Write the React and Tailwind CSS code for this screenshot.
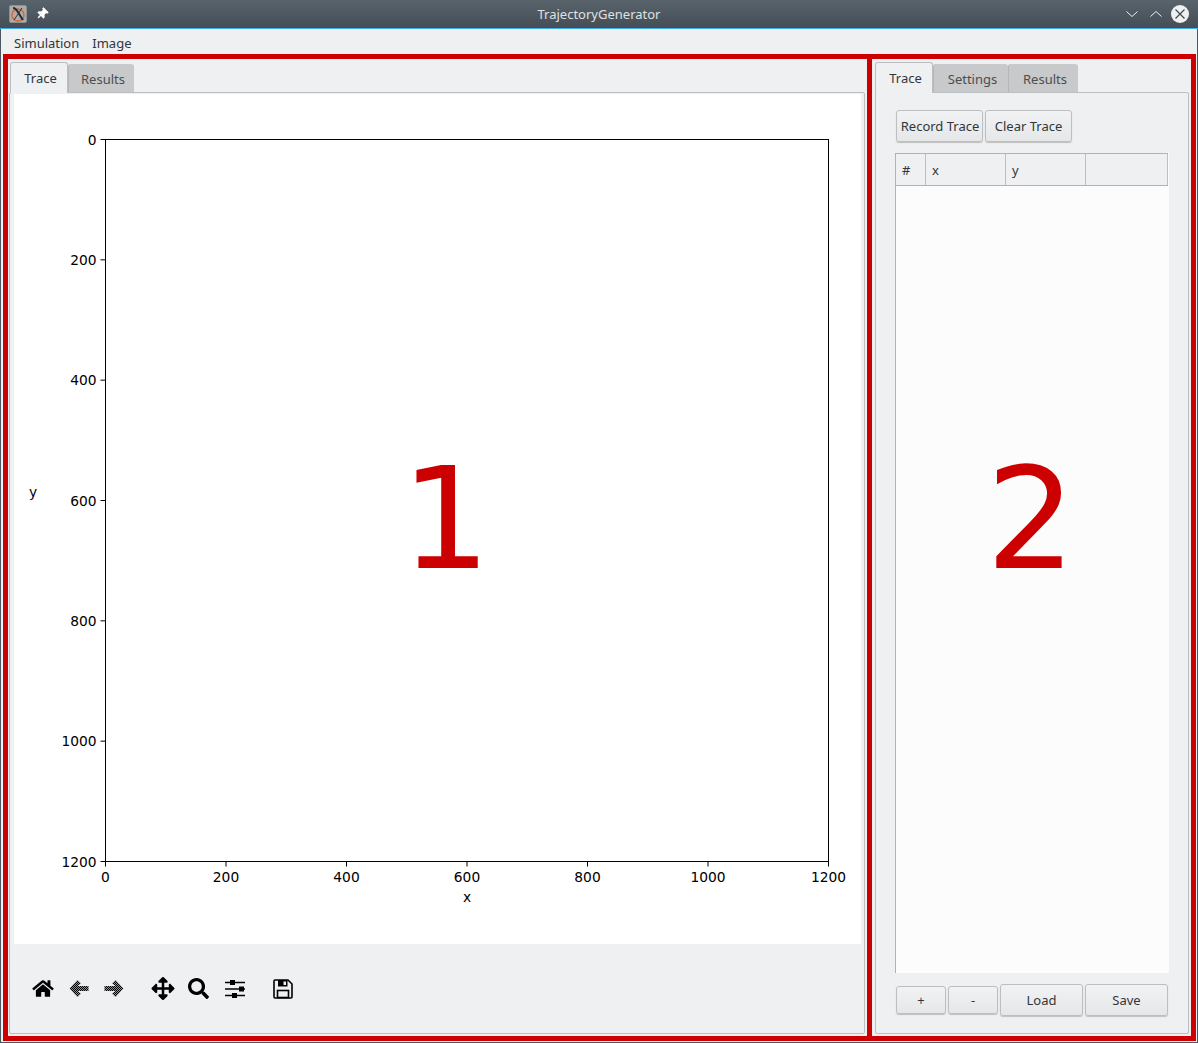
import { FaHome, FaArrowsAlt, FaSearch, FaThumbtack } from "react-icons/fa";

/* ================= SMALL PARTS ================= */

function Tab({ label, active, width }) {
    if (active) {
        return (
            <div
                className={`relative z-10 flex h-[31px] items-center justify-center rounded-t-[3px] border border-b-0 border-[#bcbebf] bg-[#eff0f1] pl-[3px] pt-[1px] text-[#31363b] ${width}`}
            >
                {label}
            </div>
        );
    }
    return (
        <div
            className={`mt-[2px] flex h-[28px] items-center justify-center rounded-t-[3px] border-l border-[#b4b6b8] bg-[#c8c9cb] pl-[3px] pt-[4px] text-[#4d4d4d] ${width}`}
        >
            {label}
        </div>
    );
}

function Button({ label, className }) {
    return (
        <div
            className={`flex items-center justify-center rounded-[3px] border border-[#bcbebf] bg-gradient-to-b from-[#f1f2f3] to-[#e6e7e9] pt-[2px] text-[#31363b] shadow-[0_1px_1px_rgba(0,0,0,0.2)] ${className}`}
        >
            {label}
        </div>
    );
}

function Header({ label, className }) {
    return (
        <div className={`flex items-center border-r border-[#bcbebf] pl-[6px] pt-[2px] text-[#31363b] ${className}`}>
            {label}
        </div>
    );
}

function BigNumber({ value, className }) {
    return (
        <div
            className={`pointer-events-none absolute text-[141px] leading-none text-[#cc0000] [font-family:'DejaVu_Sans',sans-serif] ${className}`}
        >
            {value}
        </div>
    );
}

/* ================= CHART ================= */

const ticks = [0, 200, 400, 600, 800, 1000, 1200];

function Chart() {
    const left = 91.5;
    const top = 45.5;
    const width = 723;
    const height = 722;
    return (
        <svg width="847" height="850" className="block" style={{ fontFamily: "'DejaVu Sans', sans-serif" }}>
            <rect x={left} y={top} width={width} height={height} fill="#fff" stroke="#000" strokeWidth="1" />
            {ticks.map((t) => {
                const py = (t / 1200) * height;
                const px = (t / 1200) * width;
                return (
                    <g key={t} fontSize="13.8" fill="#000">
                        <line x1={left - 5} x2={left} y1={top + py} y2={top + py} stroke="#000" />
                        <text x={left - 9} y={top + py + 5.3} textAnchor="end">
                            {t}
                        </text>
                        <line x1={left + px} x2={left + px} y1={top + height} y2={top + height + 5} stroke="#000" />
                        <text x={left + px} y={top + height + 20.5} textAnchor="middle">
                            {t}
                        </text>
                    </g>
                );
            })}
            <text x={left + width / 2} y="808" textAnchor="middle" fontSize="13.8">
                x
            </text>
            <text x="19" y="403" textAnchor="middle" fontSize="13.8">
                y
            </text>
        </svg>
    );
}

/* ================= ICONS ================= */

function AppLogo() {
    return (
        <svg width="18" height="18" viewBox="0 0 18 18">
            <rect x="0.5" y="0.5" width="17" height="17" rx="1.5" fill="#a9adb0" stroke="#8b9095" />
            <circle cx="9" cy="10" r="6" fill="none" stroke="#d9682b" strokeWidth="1.5" />
            <path d="M4 3 C8 3 9 8 14 15" fill="none" stroke="#2a2a2a" strokeWidth="2" />
            <path d="M13 3 L5 15" fill="none" stroke="#333" strokeWidth="1" />
        </svg>
    );
}

// disabled toolbar arrows are dithered in the picture
function DitherArrow({ id, flip, className }) {
    return (
        <svg width="20" height="20" viewBox="0 0 20 20" className={className}>
            <defs>
                <pattern id={id} width="2" height="2" patternUnits="userSpaceOnUse">
                    <rect width="2" height="2" fill="#8f9091" />
                    <rect width="1" height="1" fill="#000" />
                    <rect x="1" y="1" width="1" height="1" fill="#000" />
                </pattern>
            </defs>
            <path
                transform={flip ? "matrix(-1 0 0 1 20 0)" : undefined}
                d="M0.5 9.5 L8.5 1 L12 4.5 L8.5 7 L19.5 7 L19.5 12 L8.5 12 L12 14.5 L8.5 18 Z"
                fill={`url(#${id})`}
            />
        </svg>
    );
}

function SlidersIcon({ className }) {
    return (
        <svg width="20" height="20" viewBox="0 0 20 20" className={className}>
            <path d="M0 3.5H20M0 10H20M0 16.5H20" stroke="#000" strokeWidth="1.5" />
            <rect x="5" y="1" width="5" height="5" fill="#000" />
            <rect x="14" y="7.5" width="5" height="5" fill="#000" />
            <rect x="7" y="14" width="5" height="5" fill="#000" />
        </svg>
    );
}

function SaveIcon({ className }) {
    return (
        <svg width="20" height="20" viewBox="0 0 20 20" className={className}>
            <path
                d="M2 1H15L19 5V18C19 18.6 18.6 19 18 19H2C1.4 19 1 18.6 1 18V2C1 1.4 1.4 1 2 1Z"
                fill="none"
                stroke="#000"
                strokeWidth="1.6"
            />
            <rect x="4.5" y="11.5" width="11" height="7" fill="none" stroke="#000" strokeWidth="1.6" />
            <path fillRule="evenodd" d="M5 1H14.5V7.5H5ZM10.5 2.5V6H13V2.5Z" fill="#000" />
        </svg>
    );
}

/* ================= PAGE ================= */

export default function App() {
    return (
        <div className="flex h-[1043px] w-[1198px] flex-col overflow-hidden bg-[#eff0f1] text-[13px] text-[#31363b] [font-family:'Noto_Sans',sans-serif]">
            {/* ===== TITLE BAR ===== */}
            <div className="relative flex h-[28px] shrink-0 items-center bg-gradient-to-b from-[#59636c] to-[#454e57] text-[#eff0f1]">
                <div className="ml-[9px]">
                    <AppLogo />
                </div>
                <FaThumbtack className="ml-[9px] rotate-45 text-[12px] text-white" />
                <div className="absolute inset-x-0 top-[5px] text-center leading-[18px] text-[#dfe1e3]">
                    TrajectoryGenerator
                </div>
                <div className="ml-auto mr-[9px] flex items-center">
                    <svg width="14" height="10" viewBox="0 0 14 10" className="mr-[10px]">
                        <path d="M1.5 2.5 L7 7.5 L12.5 2.5" fill="none" stroke="#eff0f1" strokeWidth="1" />
                    </svg>
                    <svg width="14" height="10" viewBox="0 0 14 10" className="mr-[8px]">
                        <path d="M1.5 7.5 L7 2.5 L12.5 7.5" fill="none" stroke="#eff0f1" strokeWidth="1" />
                    </svg>
                    <svg width="18" height="18" viewBox="0 0 18 18">
                        <circle cx="9" cy="9" r="9" fill="#eff0f1" />
                        <path d="M4.5 4.5 L13.5 13.5 M13.5 4.5 L4.5 13.5" stroke="#3f474e" strokeWidth="1.2" />
                    </svg>
                </div>
            </div>
            <div className="h-[1px] shrink-0 bg-[#3daee9]" />

            <div className="flex min-h-0 flex-1 flex-col border-x border-b border-[#4d5660]">
                {/* ===== MENU ===== */}
                <div className="flex h-[25px] shrink-0 items-center gap-[13px] pl-[13px] pt-[5px] text-[#31363b]">
                    <span>Simulation</span>
                    <span>Image</span>
                </div>

                <div className="flex min-h-0 flex-1 pb-[1px] pl-[2px] pr-[1px]">
                    {/* ===== LEFT PANEL ===== */}
                    <div className="relative flex w-[869px] shrink-0 flex-col border-[5px] border-[#cc0000] pl-[1px] pr-[2px] pt-[3px]">
                        <div className="flex h-[31px] shrink-0 pl-[1px]">
                            <Tab label="Trace" active width="w-[58px]" />
                            <Tab label="Results" width="w-[66px]" />
                        </div>
                        <div className="-mt-[1px] mb-[2px] flex min-h-0 flex-1 flex-col rounded-[2px] border border-[#bcbebf] pl-[4px] pr-[3px] pt-[1px]">
                            <div className="h-[850px] shrink-0 bg-white">
                                <Chart />
                            </div>
                            <div className="flex flex-1 items-center pl-[18px] text-black">
                                <FaHome className="w-[22px] text-[19px]" />
                                <DitherArrow id="dither-back" className="ml-[15px]" />
                                <DitherArrow id="dither-forward" flip className="ml-[15px]" />
                                <FaArrowsAlt className="ml-[27px] w-[24px] text-[23px]" />
                                <FaSearch className="ml-[13px] w-[21px] text-[21px]" />
                                <SlidersIcon className="ml-[16px]" />
                                <SaveIcon className="ml-[28px]" />
                            </div>
                        </div>
                        <BigNumber value="1" className="left-[393px] top-[390px]" />
                    </div>

                    {/* ===== RIGHT PANEL ===== */}
                    <div className="relative flex flex-1 flex-col border-y-[5px] border-r-[5px] border-[#cc0000] pl-[3px] pr-[2px] pt-[3px]">
                        <div className="flex h-[31px] shrink-0">
                            <Tab label="Trace" active width="w-[58px]" />
                            <Tab label="Settings" width="w-[75px]" />
                            <Tab label="Results" width="w-[70px]" />
                        </div>
                        <div className="-mt-[1px] mb-[2px] flex min-h-0 flex-1 flex-col rounded-[2px] border border-[#bcbebf] pl-[20px] pr-[20px] pt-[17px]">
                            <div className="flex h-[32px] shrink-0 gap-[2px]">
                                <Button label="Record Trace" className="w-[87px] pl-[1px]" />
                                <Button label="Clear Trace" className="w-[87px]" />
                            </div>
                            <div className="-ml-[1px] -mr-[1px] mt-[11px] flex min-h-0 flex-1 flex-col border-l border-[#b0b2b4] bg-[#fcfcfc]">
                                <div className="mr-[1px] flex h-[33px] shrink-0 border-y border-[#b0b2b4] bg-[#eff0f1]">
                                    <Header label="#" className="w-[30px]" />
                                    <Header label="x" className="w-[80px]" />
                                    <Header label="y" className="w-[80px]" />
                                    <Header label="" className="flex-1" />
                                </div>
                            </div>
                            <div className="mb-[17px] mt-[11px] flex h-[32px] shrink-0 items-center gap-[2px]">
                                <Button label="+" className="h-[28px] w-[50px]" />
                                <Button label="-" className="h-[28px] w-[50px]" />
                                <Button label="Load" className="h-[32px] w-[83px]" />
                                <Button label="Save" className="h-[32px] w-[83px]" />
                            </div>
                        </div>
                        <BigNumber value="2" className="left-[114px] top-[390px]" />
                    </div>
                </div>
            </div>
        </div>
    );
}
